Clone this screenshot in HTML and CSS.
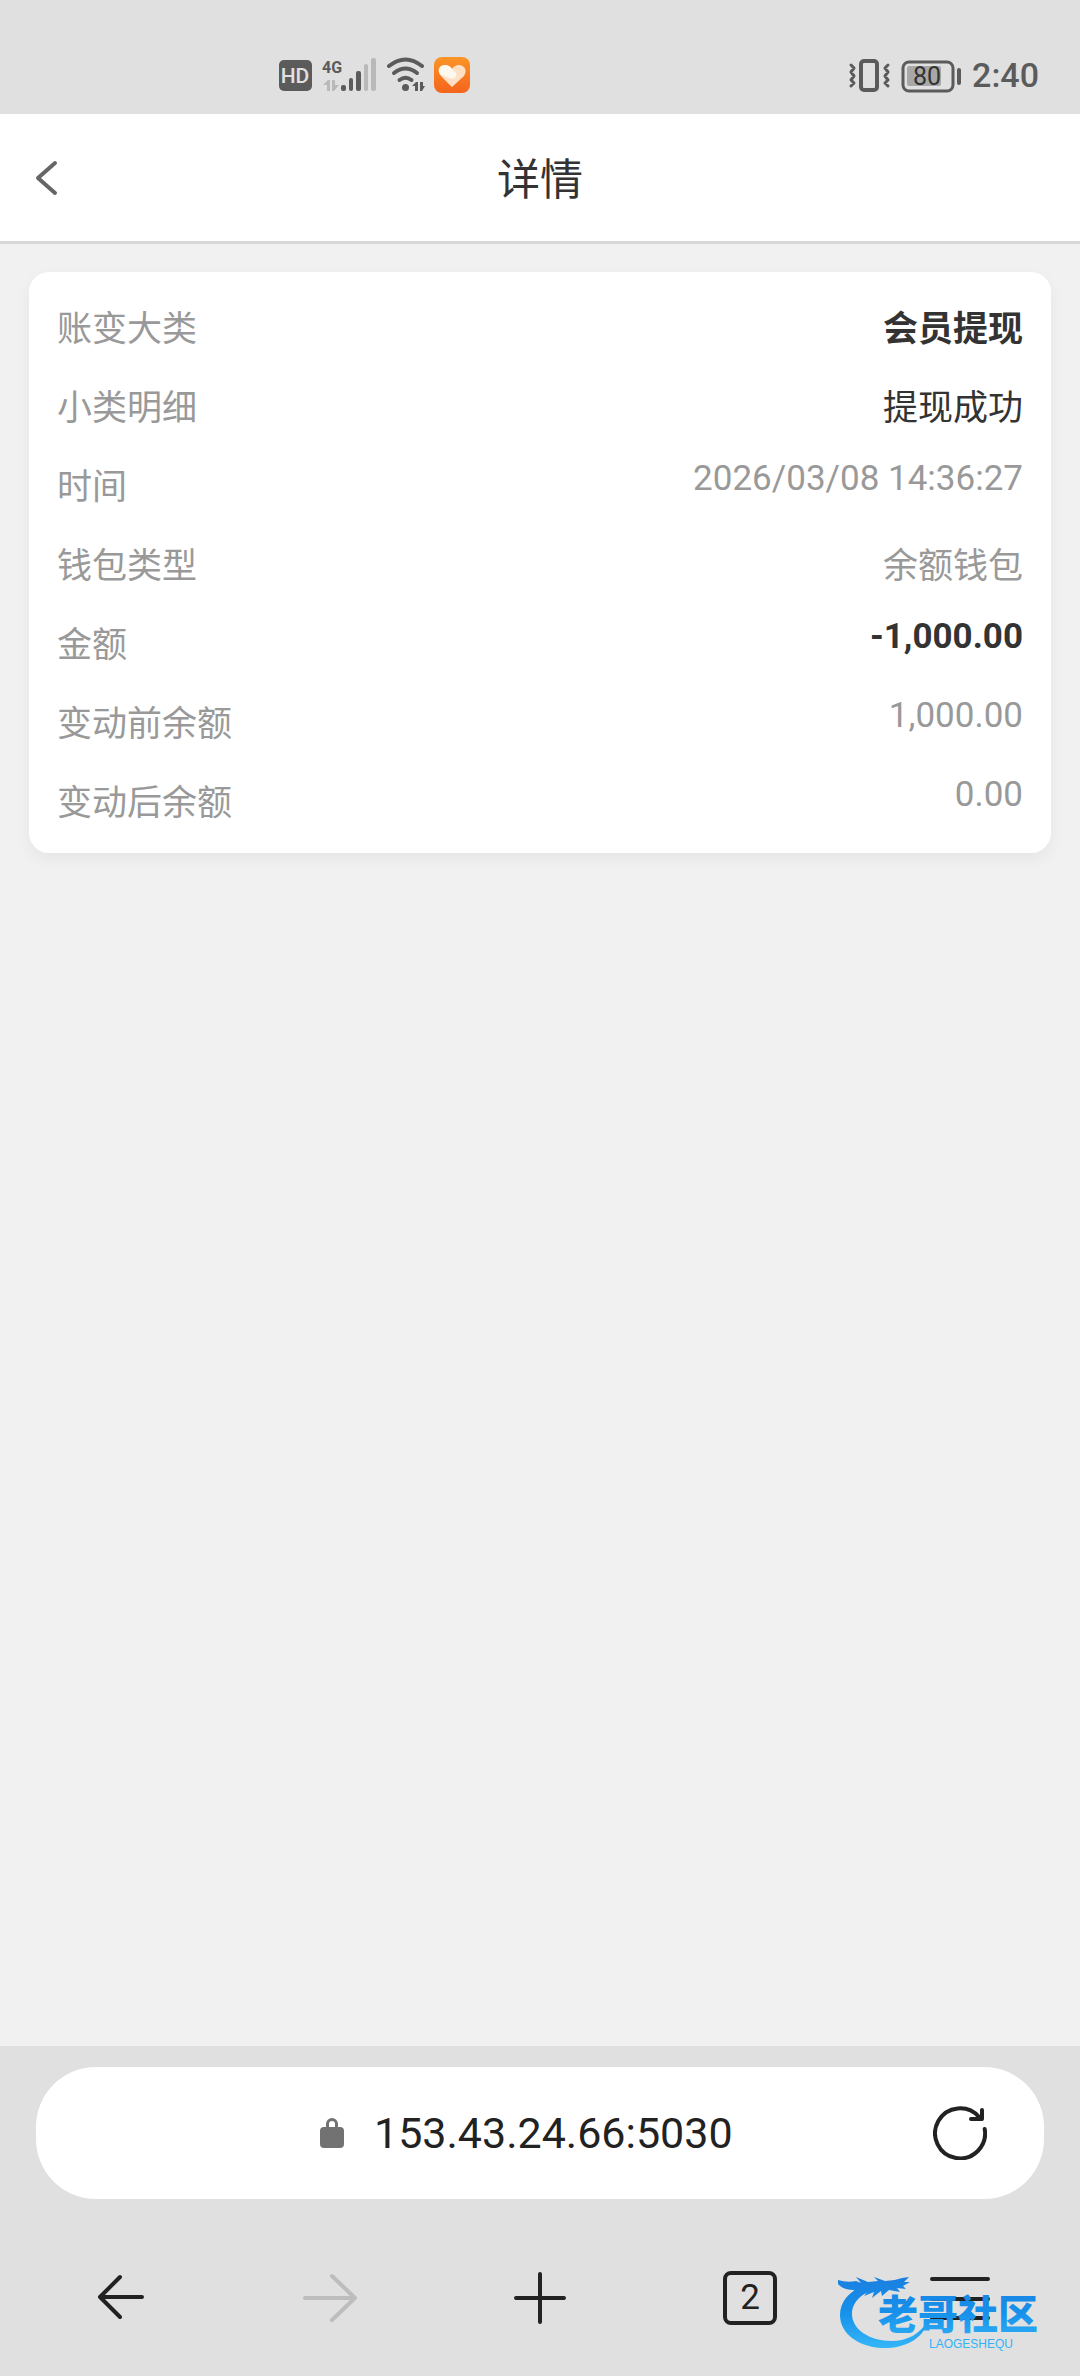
FILE: index.html
```html
<!DOCTYPE html>
<html lang="zh-CN">
	<head>
		<meta charset="utf-8" />
		<meta name="viewport" content="width=device-width, initial-scale=1" />
		<title>详情</title>
		<link rel="stylesheet" href="styles.css">
	</head>
	<body>
		<div class="status-bar">
			<div class="status-group">
				<svg width="33" height="36" viewBox="0 0 33 36">
					<rect x="0" y="3" width="33" height="31" rx="5" fill="#5b5b5b" />
					<text class="hd" x="16" y="26" text-anchor="middle">HD</text>
				</svg>
				<svg width="56" height="36" viewBox="0 0 56 36">
					<text class="net" x="1" y="16">4G</text>
					<g fill="#b9b9b9">
						<path d="M2 28l5-5h2v11H6v-6z" />
						<path d="M18 28l-5 6h-2V23h3v5z" />
						<rect x="43" y="7" width="4" height="27" rx="2" />
						<rect x="50" y="1" width="5" height="33" rx="2" />
					</g>
					<g fill="#5b5b5b">
						<rect x="20" y="28" width="5" height="6" rx="2" />
						<rect x="28" y="21" width="4" height="13" rx="2" />
						<rect x="35" y="14" width="5" height="20" rx="2" />
					</g>
				</svg>
				<svg width="39" height="36" viewBox="0 0 39 36">
					<g fill="none" stroke="#5b5b5b" stroke-width="4" stroke-linecap="round">
						<path d="M3 9Q19.500-4 36 9" />
						<path d="M8 16q11.500-9 23 0" />
						<path d="M13.500 23q6-4.500 12 0" />
					</g>
					<circle cx="19.500" cy="30.500" r="3.500" fill="#5b5b5b" />
					<path d="M26 29l4-4h2v9h-3v-5zM39 29l-3 5h-2v-9h3v4z" fill="#5b5b5b" />
				</svg>
				<svg width="36" height="36" viewBox="0 0 36 36">
					<defs>
						<linearGradient id="orange" x2="0" y2="1">
							<stop offset="0" stop-color="#fb9527" />
							<stop offset="1" stop-color="#f4641c" />
						</linearGradient>
					</defs>
					<rect width="36" height="36" rx="8" fill="url(#orange)" />
					<path d="M18 30L7 19C2 13 6 8 11 8c3 0 5 1 7 4 2-3 4-4 7-4 5 0 9 5 5 11z" fill="#ffe0c4" />
					<path d="M18 22L7 18C2 13 6 8 11 8c3 0 5 1 7 4l4 4q2 4-4 6z" fill="#fff8ee" />
				</svg>
			</div>
			<div class="status-group">
				<svg width="44" height="36" viewBox="0 0 44 36" fill="none" stroke="#5b5b5b" stroke-width="4" stroke-linecap="round" stroke-linejoin="round">
					<rect x="13" y="4" width="16" height="29" rx="3" />
					<path d="M3 8l3 3-3 4 3 4-3 4 3 3-3 3M40 8l-3 3 3 4-3 4 3 4-3 3 3 3" stroke-width="3" />
				</svg>
				<svg width="62" height="36" viewBox="0 0 62 36">
					<rect x="2" y="5" width="50" height="29" rx="6" fill="none" stroke="#5b5b5b" stroke-width="3" />
					<rect x="6" y="9" width="34" height="20" rx="2" fill="#a8a8a8" />
					<rect x="56" y="11" width="4" height="17" rx="2" fill="#5b5b5b" />
					<text class="battery" x="26" y="28" text-anchor="middle">80</text>
				</svg>
				<span class="clock">2:40</span>
			</div>
		</div>

		<header class="nav-header">
			<button class="back" aria-label="返回">
				<svg width="26" height="38" viewBox="0 0 26 38">
					<path d="M20 4L3 19l17 15" />
				</svg>
			</button>
			<h1>详情</h1>
		</header>

		<main>
			<dl class="card">
				<div class="row">
					<dt>账变大类</dt>
					<dd class="dark bold">会员提现</dd>
				</div>
				<div class="row">
					<dt>小类明细</dt>
					<dd class="dark">提现成功</dd>
				</div>
				<div class="row">
					<dt>时间</dt>
					<dd>2026/03/08 14:36:27</dd>
				</div>
				<div class="row">
					<dt>钱包类型</dt>
					<dd>余额钱包</dd>
				</div>
				<div class="row">
					<dt>金额</dt>
					<dd class="dark bold">-1,000.00</dd>
				</div>
				<div class="row">
					<dt>变动前余额</dt>
					<dd>1,000.00</dd>
				</div>
				<div class="row">
					<dt>变动后余额</dt>
					<dd>0.00</dd>
				</div>
			</dl>
		</main>

		<footer class="browser-bar">
			<div class="address">
				<div class="address-url">
					<svg width="24" height="30" viewBox="0 0 24 30">
						<rect y="9" width="24" height="21" rx="4" fill="#727272" />
						<path d="M7.500 11V6a4.500 4.500 0 0 1 9 0v5" fill="none" stroke="#727272" stroke-width="3" />
					</svg>
					<input type="text" aria-label="网址" value="153.43.24.66:5030" />
				</div>
				<button aria-label="刷新">
					<svg class="line" width="54" height="54" viewBox="0 0 54 54">
						<path d="M51.700 23A25 25 0 1 1 46 11" />
						<path d="M49 4v9H38" />
					</svg>
				</button>
			</div>
			<nav class="toolbar">
				<button aria-label="后退">
					<svg class="line" width="54" height="54" viewBox="0 0 54 54">
						<path d="M27 6L7 26l20 20M7 26h42" />
					</svg>
				</button>
				<button aria-label="前进" disabled>
					<svg class="line" width="54" height="54" viewBox="0 0 54 54">
						<path d="M29 5l23 22-23 22M2 27h50" />
					</svg>
				</button>
				<button aria-label="新建标签页">
					<svg class="line" width="54" height="54" viewBox="0 0 54 54">
						<path d="M27 3v48M3 27h48" />
					</svg>
				</button>
				<button aria-label="标签页">
					<span class="tabs">2</span>
				</button>
				<button aria-label="菜单">
					<svg class="line" width="60" height="54" viewBox="0 0 60 54">
						<path d="M2 8h56M2 28h56M2 47h56" />
					</svg>
				</button>
			</nav>
			<svg class="watermark" width="230" height="80" viewBox="0 0 230 80">
				<defs>
					<linearGradient id="blue" gradientUnits="userSpaceOnUse" x1="0" y1="4" x2="0" y2="76">
						<stop offset="0" stop-color="#1b7fe0" />
						<stop offset=".5" stop-color="#1690ea" />
						<stop offset="1" stop-color="#35b6f8" />
					</linearGradient>
				</defs>
				<g fill="url(#blue)">
					<path d="M42 11C18 13 4 27 4 43c0 20 21 34 48 33 20-1 36-11 40-27-8 13-21 20-36 20-23 0-40-12-40-27 0-12 10-22 28-26z" />
					<path d="M2 8q9 3 18 1l5 2-5-6 12 5 10-1-4-4 11 4q9 0 17-3l7-1-5 5h6l-7 4 3 3-9-1 3 4-11-2-7 6-1-5-9 7 2-6-10 4 5-6-9 2-5 5-1-7q-11 0-16-6z" />
					<text class="wm-name" x="42" y="57">老哥社区</text>
					<text class="wm-sub" x="93" y="76">LAOGESHEQU</text>
				</g>
			</svg>
		</footer>
	</body>
</html>
```

FILE: styles.css
```css
* {
	box-sizing: border-box;
}
body {
	margin: 0;
	min-height: 100vh;
	display: flex;
	flex-direction: column;
	font-family: Roboto, "Noto Sans CJK SC", sans-serif;
	font-size: 35px;
	color: #333;
	background-color: #f1f1f1;
}
svg {
	display: block;
	flex-shrink: 0;
}
button {
	display: flex;
	justify-content: center;
	align-items: center;
	padding: 0;
	border: none;
	background: none;
	font: inherit;
	color: #222;
	cursor: pointer;
}

/* status bar */
.status-bar {
	display: flex;
	justify-content: space-between;
	align-items: center;
	height: 114px;
	padding: 36px 41px 0 279px;
	background-color: #e0e0e0;
}
.status-group {
	display: flex;
	align-items: center;
	gap: 9px;
	height: 36px;
}
.clock {
	font-size: 34px;
	font-weight: 500;
	line-height: 36px;
	color: #5b5b5b;
}
.hd {
	font-size: 21px;
	font-weight: 500;
	fill: #e0e0e0;
}
.net {
	font-family: "Liberation Sans Narrow", Roboto, sans-serif;
	font-size: 16px;
	font-weight: 700;
	fill: #5b5b5b;
}
.battery {
	font-size: 25px;
	font-weight: 400;
	fill: #333;
}

/* page header */
.nav-header {
	display: grid;
	grid-template-columns: 96px 1fr 96px;
	align-items: center;
	height: 130px;
	background-color: #fff;
	border-bottom: 3px solid #d8d8d8;
}
.nav-header h1 {
	margin: 0;
	padding-bottom: 4px;
	font-size: 43px;
	font-weight: 400;
	text-align: center;
}
.back {
	height: 100%;
}
.back path {
	fill: none;
	stroke: #666;
	stroke-width: 4;
	stroke-linecap: round;
	stroke-linejoin: round;
}

/* details */
main {
	flex: 1;
	padding: 28px 29px;
}
.card {
	display: flex;
	flex-direction: column;
	gap: 28px;
	margin: 0;
	padding: 28px;
	background-color: #fff;
	border-radius: 20px;
	box-shadow: 0 6px 16px rgba(0, 0, 0, 0.05);
}
.row {
	display: flex;
	justify-content: space-between;
	align-items: flex-start;
	color: #999;
}
.row dd {
	margin: 0;
	text-align: right;
}
.row .dark {
	color: #333;
}
.row .bold {
	font-weight: 700;
}

/* browser controls */
.browser-bar {
	position: relative;
	padding: 21px 0 0;
	background-color: #e0e0e0;
}
.address {
	display: flex;
	align-items: center;
	height: 132px;
	margin: 0 36px;
	padding: 0 57px 0 85px;
	background-color: #fff;
	border-radius: 60px;
}
.address-url {
	flex: 1;
	display: flex;
	justify-content: center;
	align-items: center;
	gap: 30px;
}
.address input {
	width: 360px;
	padding: 0;
	border: none;
	outline: none;
	background: none;
	font-family: inherit;
	font-size: 43px;
	color: #222;
}
.toolbar {
	display: grid;
	grid-template-columns: repeat(5, 1fr);
	padding: 21px 15px 0;
}
.toolbar button {
	height: 156px;
}
.line {
	fill: none;
	stroke: #222;
	stroke-width: 4;
	stroke-linecap: round;
	stroke-linejoin: round;
}
button:disabled .line {
	stroke: #bdbdbd;
}
.tabs {
	width: 54px;
	height: 54px;
	border: 4px solid #222;
	border-radius: 8px;
	line-height: 46px;
	text-align: center;
}
.watermark {
	position: absolute;
	right: 14px;
	bottom: 24px;
	pointer-events: none;
}
.wm-name {
	font-family: "Noto Sans CJK SC", sans-serif;
	font-size: 40px;
	font-weight: 900;
}
.wm-sub {
	font-family: "Liberation Sans", sans-serif;
	font-size: 12px;
}
```
